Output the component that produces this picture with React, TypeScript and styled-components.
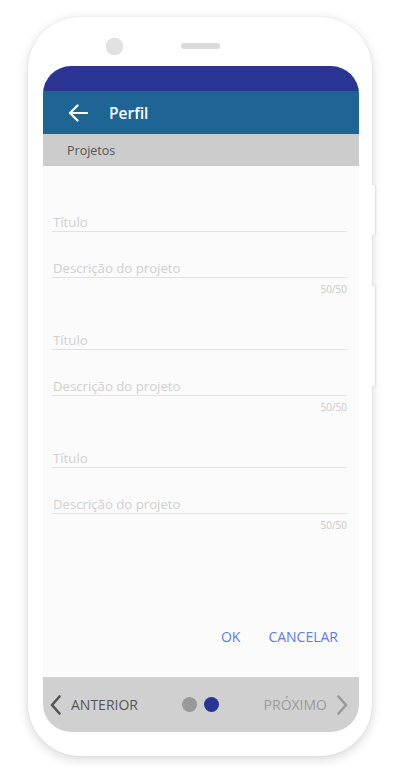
import React from "react";
import styled, { createGlobalStyle } from "styled-components";

const Global = createGlobalStyle`
  html, body { margin: 0; padding: 0; background: #ffffff; }
  body { font-family: "Open Sans", "Noto Sans", Arial, sans-serif; }
  * { box-sizing: border-box; }
`;

const Page = styled.div`
  width: 400px;
  height: 775px;
  padding: 17px 0 0 28px;
`;

const Phone = styled.div`
  position: relative;
  width: 344px;
  height: 739px;
  border-radius: 52px;
  background: #ffffff;
  box-shadow: 0 3px 12px rgba(0, 0, 0, 0.16), 0 0 2px rgba(0, 0, 0, 0.08);
  display: flex;
  flex-direction: column;
`;

const SideButton = styled.div<{ $top: number; $h: number }>`
  position: absolute;
  right: -3px;
  top: ${(p) => p.$top}px;
  width: 4px;
  height: ${(p) => p.$h}px;
  background: #ffffff;
  border-radius: 0 2px 2px 0;
  box-shadow: 1px 0 2px rgba(0, 0, 0, 0.1);
`;

const TopBezel = styled.div`
  height: 49px;
  display: flex;
  align-items: flex-start;
  padding: 21px 0 0 78px;
  gap: 58px;
`;

const Camera = styled.div`
  width: 17px;
  height: 17px;
  border-radius: 50%;
  background: #e2e2e2;
  box-shadow: inset 0 0 1px rgba(0, 0, 0, 0.15);
`;

const Speaker = styled.div`
  margin-top: 5px;
  width: 39px;
  height: 6px;
  border-radius: 3px;
  background: #dadada;
`;

const Screen = styled.div`
  margin-left: 15px;
  width: 316px;
  height: 666px;
  border-radius: 28px;
  overflow: hidden;
  display: flex;
  flex-direction: column;
  background: #fbfbfb;
`;

const StatusBar = styled.div`
  height: 25px;
  background: #2a3593;
`;

const Header = styled.div`
  height: 43px;
  background: #1e6595;
  display: flex;
  align-items: center;
  padding-left: 25px;
  gap: 21px;
`;

const Title = styled.div`
  color: #ffffff;
  font-size: 15.5px;
  font-weight: 600;
`;

const SubHeader = styled.div`
  height: 32px;
  background: #cccccc;
  display: flex;
  align-items: center;
  padding-left: 24px;
  font-size: 12.5px;
  color: #555555;
`;

const Content = styled.div`
  flex: 1;
  display: flex;
  flex-direction: column;
  padding: 47px 12px 0 9px;
`;

const Group = styled.div`
  display: flex;
  flex-direction: column;
  & + & {
    margin-top: 36px;
  }
`;

const Field = styled.div<{ $gap?: number }>`
  height: 19px;
  line-height: 18px;
  font-size: 13.2px;
  color: #d0d0d0;
  padding-left: 1px;
  border-bottom: 1px solid #e2e2e2;
  margin-top: ${(p) => p.$gap ?? 0}px;
`;

const Counter = styled.div`
  margin-top: 5px;
  text-align: right;
  font-size: 10px;
  line-height: 12px;
  color: #c8c8c8;
`;

const Actions = styled.div`
  margin-top: auto;
  margin-bottom: 31px;
  display: flex;
  justify-content: flex-end;
  gap: 28px;
  padding-right: 9px;
`;

const ActionButton = styled.div`
  font-size: 14px;
  line-height: 18px;
  color: #5b7cf0;
`;

const Nav = styled.div`
  height: 55px;
  background: #d0d0d0;
  display: grid;
  grid-template-columns: 1fr auto 1fr;
  align-items: center;
  padding: 0 11px 0 7px;
`;

const NavItem = styled.div<{ $muted?: boolean; $end?: boolean }>`
  display: flex;
  align-items: center;
  justify-content: ${(p) => (p.$end ? "flex-end" : "flex-start")};
  gap: 10px;
  font-size: 14px;
  color: ${(p) => (p.$muted ? "#9a9a9a" : "#555555")};
`;

const Dots = styled.div`
  display: flex;
  gap: 7px;
  margin-left: 3px;
`;

const Dot = styled.div<{ $active?: boolean }>`
  width: 15px;
  height: 15px;
  border-radius: 50%;
  background: ${(p) => (p.$active ? "#2a3593" : "#999999")};
`;

const Chevron = ({ dir, color }: { dir: "left" | "right"; color: string }) => (
  <svg width="11" height="20" viewBox="0 0 11 20">
    <polyline
      points={dir === "left" ? "9.5,1.5 2,10 9.5,18.5" : "1.5,1.5 9,10 1.5,18.5"}
      fill="none"
      stroke={color}
      strokeWidth="2.6"
      strokeLinecap="round"
      strokeLinejoin="round"
    />
  </svg>
);

const BackArrow = () => (
  <svg width="20" height="18" viewBox="0 0 20 18">
    <path
      d="M19 9H2M9.5 1.5L2 9l7.5 7.5"
      fill="none"
      stroke="#ffffff"
      strokeWidth="2.2"
      strokeLinecap="round"
      strokeLinejoin="round"
    />
  </svg>
);

const groups = [0, 1, 2];

export default function App() {
  return (
    <>
      <Global />
      <Page>
        <Phone>
          <SideButton $top={168} $h={50} />
          <SideButton $top={269} $h={100} />
          <TopBezel>
            <Camera />
            <Speaker />
          </TopBezel>
          <Screen>
            <StatusBar />
            <Header>
              <BackArrow />
              <Title>Perfil</Title>
            </Header>
            <SubHeader>Projetos</SubHeader>
            <Content>
              {groups.map((g) => (
                <Group key={g}>
                  <Field>Título</Field>
                  <Field $gap={27}>Descrição do projeto</Field>
                  <Counter>50/50</Counter>
                </Group>
              ))}
              <Actions>
                <ActionButton>OK</ActionButton>
                <ActionButton>CANCELAR</ActionButton>
              </Actions>
            </Content>
            <Nav>
              <NavItem>
                <Chevron dir="left" color="#555555" />
                <span>ANTERIOR</span>
              </NavItem>
              <Dots>
                <Dot />
                <Dot $active />
              </Dots>
              <NavItem $muted $end>
                <span>PRÓXIMO</span>
                <Chevron dir="right" color="#9a9a9a" />
              </NavItem>
            </Nav>
          </Screen>
        </Phone>
      </Page>
    </>
  );
}
